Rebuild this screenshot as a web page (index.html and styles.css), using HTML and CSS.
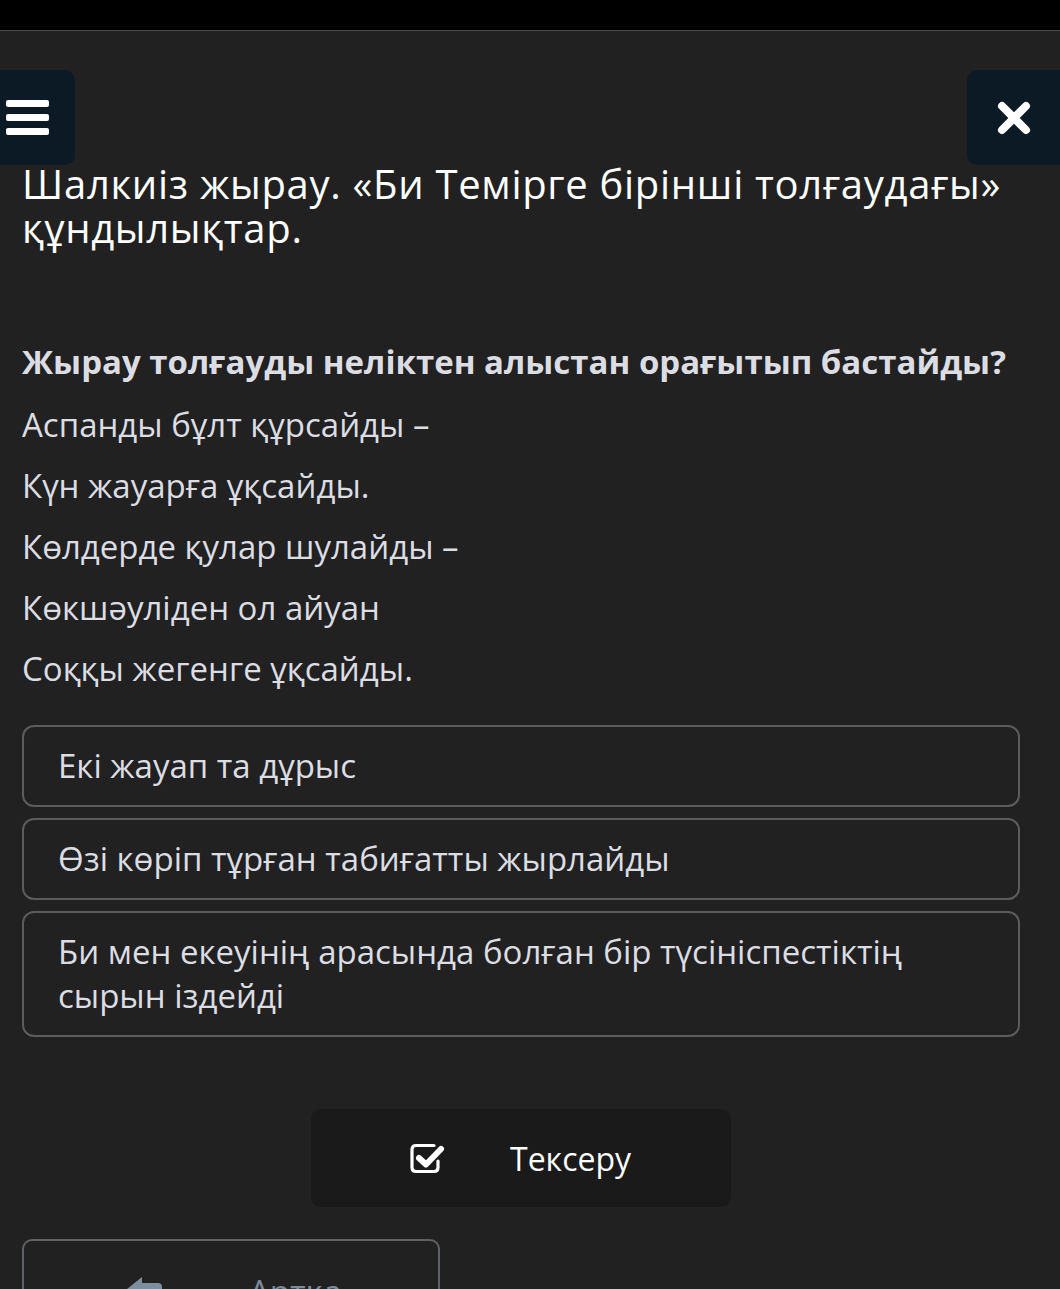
FILE: index.html
```html
<!DOCTYPE html>
<html lang="kk">
<head>
<meta charset="utf-8">
<title>Шалкиіз жырау</title>
<link rel="stylesheet" href="styles.css">
</head>
<body>
<div class="statusbar"></div>
<button class="menu-btn" aria-label="Мәзір">
  <span class="bar"></span><span class="bar"></span><span class="bar"></span>
</button>
<button class="close-btn" aria-label="Жабу">
  <svg width="36" height="36" viewBox="0 0 36 36"><path d="M6 6 L30 30 M30 6 L6 30" stroke="#fff" stroke-width="8" stroke-linecap="round"/></svg>
</button>
<main class="page">
  <h1 class="title">Шалкиіз жырау. «Би Темірге бірінші толғаудағы» құндылықтар.</h1>
  <p class="question">Жырау толғауды неліктен алыстан орағытып бастайды?</p>
  <div class="poem">
    <p>Аспанды бұлт құрсайды –</p>
    <p>Күн жауарға ұқсайды.</p>
    <p>Көлдерде қулар шулайды –</p>
    <p>Көкшәуліден ол айуан</p>
    <p>Соққы жегенге ұқсайды.</p>
  </div>
  <div class="options">
    <div class="option">Екі жауап та дұрыс</div>
    <div class="option">Өзі көріп тұрған табиғатты жырлайды</div>
    <div class="option">Би мен екеуінің арасында болған бір түсініспестіктің сырын іздейді</div>
  </div>
  <div class="check-row">
    <button class="check-btn">
      <svg width="38" height="34" viewBox="0 0 38 34"><path d="M25 4.5 H7 Q3 4.5 3 8.5 V26.5 Q3 30.5 7 30.5 H25 Q29 30.5 29 26.5 V20" fill="none" stroke="#fff" stroke-width="3.2" stroke-linecap="round"/><path d="M10 17 L17 23.5 L32 8" fill="none" stroke="#fff" stroke-width="6" stroke-linecap="round" stroke-linejoin="round"/></svg>
      <span>Тексеру</span>
    </button>
  </div>
  <div class="back-row">
    <button class="back-btn">
      <svg width="40" height="30" viewBox="0 0 40 30"><path d="M3 17 L18 5 L18 11 H34 Q38 11 38 15 V22 H18 V29 Z" fill="#7d8f9f"/></svg>
      <span>Артқа</span>
    </button>
  </div>
</main>
</body>
</html>
```

FILE: styles.css
```css
* { box-sizing: border-box; }
html, body { margin: 0; padding: 0; }
body {
  background: #212121;
  color: #dcdde3;
  font-family: "Open Sans", "Noto Sans", sans-serif;
  width: 1060px;
  height: 1289px;
  overflow: hidden;
  position: relative;
}
.statusbar {
  height: 31px;
  background: #000;
  border-bottom: 1px solid #4b4b4b;
}
.menu-btn, .close-btn {
  position: absolute;
  top: 70px;
  height: 95px;
  background: #0c1a25;
  border: none;
  border-radius: 10px;
  padding: 0;
  display: flex;
  align-items: center;
  justify-content: center;
}
.menu-btn {
  left: -20px;
  width: 95px;
  flex-direction: column;
  align-items: flex-start;
  padding-left: 26px;
  gap: 7px;
}
.menu-btn .bar {
  display: block;
  width: 43px;
  height: 7px;
  background: #fff;
  border-radius: 2px;
}
.close-btn {
  left: 967px;
  width: 110px;
  justify-content: flex-start;
  padding-left: 29px;
}
.page {
  width: 998px;
  margin-left: 22px;
}
.title {
  margin: 131px 0 0;
  font-size: 40px;
  line-height: 44px;
  letter-spacing: 0.7px;
  font-weight: 400;
  color: #fff;
}
.question {
  margin: 90px 0 0;
  font-size: 33px;
  line-height: 44px;
  font-weight: 700;
  color: #dcdde3;
}
.poem { margin-top: 10px; }
.poem p {
  margin: 0;
  font-size: 33px;
  line-height: 61px;
}
.options {
  margin-top: 26px;
  display: flex;
  flex-direction: column;
  gap: 11px;
}
.option {
  border: 2px solid #5c5c5e;
  border-radius: 12px;
  padding: 17px 80px 17px 34px;
  font-size: 33px;
  line-height: 44px;
  color: #dcdde3;
}
.check-row {
  margin-top: 72px;
  display: flex;
  justify-content: center;
}
.check-btn {
  width: 420px;
  height: 98px;
  background: #1a1a1a;
  border: none;
  border-radius: 10px;
  display: flex;
  align-items: center;
  padding: 0 0 0 98px;
  gap: 63px;
  color: #fff;
  font-family: inherit;
  font-size: 32px;
}
.back-row { margin-top: 32px; }
.back-btn {
  width: 418px;
  height: 98px;
  background: transparent;
  border: 2px solid #5f6366;
  border-radius: 10px;
  display: flex;
  align-items: flex-start;
  padding: 31px 0 0 100px;
  gap: 85px;
  color: #7d8a96;
  font-family: inherit;
  font-size: 33px;
  line-height: 40px;
}
```
